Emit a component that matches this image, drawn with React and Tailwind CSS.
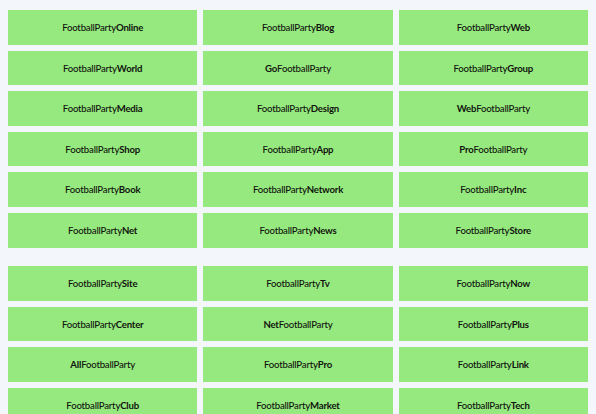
import React from "react";

const groups = [
  [
    ["", "Online"], ["", "Blog"], ["", "Web"],
    ["", "World"], ["Go", ""], ["", "Group"],
    ["", "Media"], ["", "Design"], ["Web", ""],
    ["", "Shop"], ["", "App"], ["Pro", ""],
    ["", "Book"], ["", "Network"], ["", "Inc"],
    ["", "Net"], ["", "News"], ["", "Store"],
  ],
  [
    ["", "Site"], ["", "Tv"], ["", "Now"],
    ["", "Center"], ["Net", ""], ["", "Plus"],
    ["All", ""], ["", "Pro"], ["", "Link"],
    ["", "Club"], ["", "Market"], ["", "Tech"],
  ],
];

const NameBox = ({ pre, post }) => (
  <div className="flex h-[34.6px] items-center justify-center bg-[#96e97f] pt-[2px] text-[9.6px] tracking-[-0.2px] text-[#10140e]">
    {pre && <b className="font-bold">{pre}</b>}
    <span className="font-medium">FootballParty</span>
    {post && <b className="font-bold">{post}</b>}
  </div>
);

const App = () => {
  return (
    <div
      className="min-h-screen bg-[#f3f6fa] px-2 pt-[10px]"
      style={{ fontFamily: 'Lato, "Noto Sans", sans-serif' }}
    >
      <div className="flex flex-col gap-[18.4px]">
        {groups.map((names, g) => (
          <div key={g} className="grid grid-cols-3 gap-x-[6px] gap-y-[6px]">
            {names.map(([pre, post], i) => (
              <NameBox key={i} pre={pre} post={post} />
            ))}
          </div>
        ))}
      </div>
    </div>
  );
};

export default App;
